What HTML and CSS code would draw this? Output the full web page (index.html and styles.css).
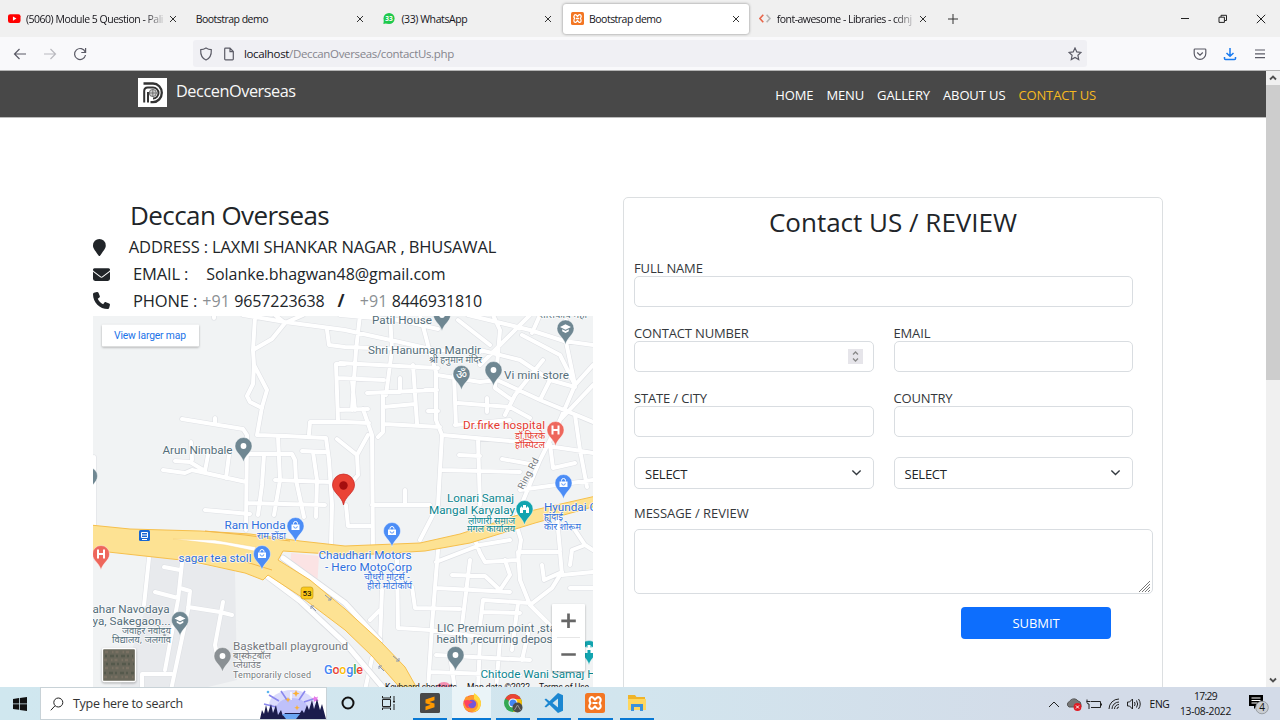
FILE: index.html
```html
<!DOCTYPE html>
<html lang="en">
<head>
<meta charset="utf-8">
<title>Bootstrap demo</title>
<link rel="stylesheet" href="styles.css">
</head>
<body>
<div class="tabs">
  <div class="tab">
    <svg class="fav" viewBox="0 0 14 14"><rect x="0" y="2.3" width="13.5" height="9.6" rx="2.4" fill="#f00"/><path d="M5.3 4.9v4.400l3.800-2.200z" fill="#fff"/></svg>
    <span class="tab-title fade t1">(5060) Module 5 Question - Pali</span><svg class="x" viewBox="0 0 8 8"><path d="M1 1l6 6M7 1L1 7"/></svg>
  </div>
  <div class="tab">
    <span class="tab-title">Bootstrap demo</span><svg class="x" viewBox="0 0 8 8"><path d="M1 1l6 6M7 1L1 7"/></svg>
  </div>
  <div class="tab">
    <svg class="fav" viewBox="0 0 14 14"><circle cx="6.500" cy="7" r="6" fill="#1fc94c"/><path d="M1 8l-.6 5 4-.8z" fill="#1fc94c"/><text x="6.500" y="9.500" font-size="7" font-weight="700" fill="#fff" text-anchor="middle">33</text></svg>
    <span class="tab-title wa">(33) WhatsApp</span><svg class="x" viewBox="0 0 8 8"><path d="M1 1l6 6M7 1L1 7"/></svg>
  </div>
  <div class="tab active">
    <svg class="fav" viewBox="0 0 20 20"><use href="#xampp"/></svg>
    <span class="tab-title">Bootstrap demo</span><svg class="x" viewBox="0 0 8 8"><path d="M1 1l6 6M7 1L1 7"/></svg>
  </div>
  <div class="tab">
    <svg class="fav" viewBox="0 0 14 14" fill="none" stroke-width="1.700"><path d="M4.600 3L1 7l3.600 4" stroke="#e8664a"/><path d="M8.200 3l3.600 4-3.600 4" stroke="#b5b5b5"/></svg>
    <span class="tab-title fade t5">font-awesome - Libraries - cdnj</span><svg class="x" viewBox="0 0 8 8"><path d="M1 1l6 6M7 1L1 7"/></svg>
  </div>
  <svg class="plus" viewBox="0 0 10 10"><path d="M5 0v10M0 5h10"/></svg>
  <div class="win">
    <svg viewBox="0 0 10 10"><path d="M1 4.500h8"/></svg>
    <svg viewBox="0 0 10 10"><path d="M1 3.200h5.400v5.200H1zM3 3V1.300h5.500v5.200H6.600"/></svg>
    <svg viewBox="0 0 10 10"><path d="M.8.8l8.400 8.400M9.200.8L.8 9.200"/></svg>
  </div>
</div>
<div class="toolbar">
  <div class="navbtns">
    <svg viewBox="0 0 14 14"><path d="M13 7H1.500M6.500 2L1.500 7l5 5"/></svg>
    <svg class="dim" viewBox="0 0 14 14"><path d="M1 7h11.500M7.500 2l5 5-5 5"/></svg>
    <svg viewBox="0 0 14 14"><path d="M12.200 5A5.500 5.500 0 1 0 12.500 8M12.600 1v4.500H8.300"/></svg>
  </div>
  <div class="url">
    <svg viewBox="0 0 14 14"><path d="M7 1c2 1.200 3.600 1.600 5.300 1.700C12.600 8 10.500 11.500 7 13 3.500 11.500 1.400 8 1.700 2.700 3.400 2.600 5 2.200 7 1z"/></svg>
    <svg viewBox="0 0 14 14"><path d="M3.500 1.200H8L11.300 4.500v7.500q0 .8-.8.8h-7q-.8 0-.8-.8V2q0-.8.8-.8zM8 1.300v3.400h3.300"/></svg>
    <span class="addr"><b>localhost</b>/DeccanOverseas/contactUs.php</span>
    <svg class="star" viewBox="0 0 14 14"><path d="M7 1l1.800 3.900 4.200.5-3.100 2.900.8 4.200L7 10.400l-3.700 2.100.8-4.200L1 5.400l4.200-.5z"/></svg>
  </div>
  <div class="tools">
    <svg viewBox="0 0 14 14"><path d="M2 2h10q.8 0 .8.800V6.500a5.800 5.800 0 0 1-11.600 0V2.800Q1.200 2 2 2zM4.200 5.500L7 8.200l2.800-2.700"/></svg>
    <svg class="dl" viewBox="0 0 14 14"><path d="M7 1v8M3.500 6L7 9.300 10.500 6M1.500 10v1.500q0 1 1 1h9q1 0 1-1V10"/></svg>
    <svg viewBox="0 0 14 14"><path d="M2 3h10M2 6.800h10M2 10.600h10"/></svg>
  </div>
</div>
<div class="viewport">
  <div class="page">
    <nav class="navbar">
      <div class="brand">
        <svg viewBox="0 0 29 29"><path fill="#fff" d="M0 0h29v29H0z"/><g fill="none" stroke="#333"><path d="M5.500 5.500h9.500a8.800 9.300 0 0 1 0 18.600H12.500" stroke-width="2.300"/><path d="M6.200 24.500V13q0-3.500 3.500-3.500h5.300a5.500 5.500 0 0 1 0 11" stroke-width="2"/><path d="M10 24.500V14" stroke-width="2"/></g><circle cx="14.800" cy="15" r="3.600" fill="#ccc" stroke="#555" stroke-width=".8"/><path d="M11.200 15h7.200M14.800 11.500v7" stroke="#555" stroke-width=".7"/></svg>
        <span>DeccenOverseas</span>
      </div>
      <div class="links"><a>HOME</a><a>MENU</a><a>GALLERY</a><a>ABOUT US</a><a class="current">CONTACT US</a></div>
    </nav>
    <main class="content">
      <section class="info">
        <h3>Deccan Overseas</h3>
        <div class="line"><svg viewBox="0 0 384 512"><path d="M172 502C27 292 0 270 0 192a192 192 0 0 1 384 0c0 78-27 100-172 310-9 14-31 14-40 0z"/></svg><span class="caps addr-line">ADDRESS : LAXMI SHANKAR NAGAR , BHUSAWAL</span></div>
        <div class="line"><svg viewBox="0 0 512 512"><path d="M48 64a48 48 0 0 0-29 86l218 164c11 9 27 9 38 0l218-164a48 48 0 0 0-29-86zM0 176v208a64 64 0 0 0 64 64h384a64 64 0 0 0 64-64V176L294 339a64 64 0 0 1-76 0z"/></svg><span class="caps label">EMAIL :</span><span class="mail">Solanke.bhagwan48@gmail.com</span></div>
        <div class="line"><svg viewBox="0 0 512 512"><path d="M165 25c-8-19-29-29-48-23l-88 24C12 30 0 46 0 64c0 247 201 448 448 448 18 0 34-12 38-29l24-88c6-19-4-40-23-48l-96-40c-16-7-35-2-46 11l-40 50c-71-34-128-91-162-162l50-40c13-11 18-30 11-46z"/></svg><span class="caps label">PHONE :</span><span class="cc">+91</span><span class="num">9657223638</span><b class="slash">/</b><span class="cc">+91</span><span class="num">8446931810</span></div>
        <svg class="map" viewBox="93 316 500 371">
          <defs>
            <path id="pin" d="M0 16C-1.500 9-8.500 6.500-8.500 0a8.500 8.500 0 0 1 17 0C8.500 6.500 1.500 9 0 16z" stroke="#fff" stroke-opacity=".7" stroke-width=".6"/>
            <g id="bag"><use href="#pin" fill="#4c8df6"/><path d="M-4-1.500h8v5.500h-8z" fill="#fff"/><path d="M-2-1.500v-1a2 2 0 0 1 4 0v1" fill="none" stroke="#fff"/><path d="M-1.800.3a1.800 1.800 0 0 0 3.600 0" fill="none" stroke="#4c8df6" stroke-width=".9"/></g>
            <g id="school"><use href="#pin" fill="#6f8792"/><path d="M-5.500-1.500L0-4.300l5.500 2.800L0 1.300zM-3.300.8L0 2.500 3.300.8v2L0 4.500-3.300 2.800z" fill="#fff"/></g>
            <g id="dot"><use href="#pin" fill="#6f8792"/><circle r="2.900" fill="#fff"/></g>
            <g id="hosp"><use href="#pin" fill="#ee675c"/><path d="M-3-4.500v9M3-4.500v9M-3 0h6" stroke="#fff" stroke-width="2"/></g>
            <g id="hall"><use href="#pin" fill="#12a4af"/><path d="M-4.500 4v-5l2-2v1.500h1V-4h3v2.500h1V-3l2 2v5h-3V1h-3v3z" fill="#fff"/></g>
            <path id="roads" d="M243 315L285 322 345 330 395 341 435 350 480 352M255 317L253 350 254 365 267 390 262 407 257 435 286 436 326 438M253 350L272 339 285 323 303 315M275 315l10 8M254 365L253 384 247 396 250 402 262 408M327 330L329 345 345 347 430 350M345 364H336L338 420M338 378L384 380M338 410L368 409M309 434L310 422 345 422 369 423M182 419L243 429 247 435 246 530M215 418v5M250 454L292 454 295 460 296 480 304 517M326 438L329 460 332 505 331 545M278 437L280 480 274 515M302 451L325 452M313 452L317 480 316 517M264 455L262 485 258 515M275 480L330 482M175 461L190 462 205 471 208 455M163 470L185 473 192 470 246 482M191 442L192 460M229 455L226 478M247 503L325 505M94 457V527M337 439L357 455 368 435M214 315v3
            M340 315L398 320 438 329M360 315L356 350 352 410M340 363L438 368M390 315L392 350 386 395M420 315L428 345 436 372V420L442 435 438 505 420 540M367 393L435 390M352 380L355 410M363 409L372 435 373 550M378 437L383 432V393M384 424L440 427M413 365L417 423M383 407L415 404M400 378v14M425 390h12M428 411h10M454 375L456 425M357 455L358 475 352 482M442 435L520 442 575 450 593 453M437 375L480 382 497 380 540 400 593 422M493 315L500 330 497 365 495 388 512 400M480 350L520 360 550 380 541 398M458 320L490 345M468 315L530 330 564 341 593 345M530 315L500 345 480 365M543 360L515 395 505 415M522 335L560 355 575 385 593 365M540 315L532 333M566 320v22L575 385M550 380L575 387M458 403L510 407 530 418M487 398v14M455 425L510 420M478 440L480 505M442 470L520 472M459 455L480 456M502 459L530 464M575 385L560 420 540 460 515 520M575 415L580 450 587 487M593 385L560 420M550 444L553 468 575 463M515 520L521 540M520 490L593 480M430 505H372M346 505L348 526 370 526M405 490v15
            M438 550L432 625 428 690M436 562L480 545 510 540M475 540L480 553 485 562 518 560 521 540M452 575L485 576 500 590 510 575 505 560M436 588L510 592M470 560L462 625M518 552L520 580 530 605 550 625M530 605L552 588 562 572 544 580 542 565M522 552L560 552 562 575 593 572M560 550L556 508M412 587L415 608 460 609M397 560L398 628 430 630 480 637M480 625L483 600 530 603M482 612L520 613M518 603L512 650M382 590L380 640 360 626M370 620L380 610M570 565L572 550 585 545 593 550M570 588H593M585 545L575 530M436 655L530 660M450 655L455 690M480 640L478 690M500 640L496 690M430 672L520 675M530 625L522 660M372 658L365 690M205 510L250 514M149 558L144 605M182 563L178 600 165 670M164 567L180 570M180 588L190 591 188 610 171 690M155 592L178 598M188 607L220 612 232 615M223 602L215 645 218 660M142 690V674H172"/>
          </defs>
          <path fill="#f1f3f4" d="M93 316h500v371H93z"/>
          <path fill="#e8eaed" d="M148 555L235 571 237 680 208 687H120L145 610z"/>
          <path fill="#fbe3e4" d="M291 553L319 556 317 588 290 568z"/>
          <g fill="none" stroke-linejoin="round" stroke-linecap="round"><use href="#roads" stroke="#dfe1e5" stroke-width="5.200"/><use href="#roads" stroke="#fff" stroke-width="4"/>
          <path d="M268 577L300 601 345 643 385 690M283 558L345 603 380 641" stroke="#dadce0" stroke-width="6.500"/><path d="M268 577L300 601 345 643 385 690M283 558L345 603 380 641" stroke="#fff" stroke-width="5"/></g>
          <path fill="#fde293" stroke="#f6bf4b" d="M90 525L130 529 200 531 250 534 300 541 345 546 420 543 460 534 530 511 596 496V506L535 523 470 543 425 551 375 554 345 555 283 551 278 560 310 580 345 609 381 642 405 667 418 690H402L372 656 345 630 300 596 268 575 263 580 245 573 190 561 90 550z"/>
          <path fill="#fff" stroke="#f6d27d" stroke-width=".5" d="M173 539L215 540 256 547 254 551 225 545z"/>
          <path fill="none" stroke="#f2b84a" d="M230 557L272 570M205 531L245 535 290 541"/>
          <g stroke="#8c96ad" fill="none"><path d="M325 595l6 5m0-3v3h-3M316 611l-5-5m0 3v-3h3M393 656l6 5m0-3v3h-3M384 671l-5-5m0 3v-3h3"/></g>
          <rect x="139" y="530" width="11" height="11" rx="1.500" fill="#1967d2"/><path d="M141.500 532.500h6v5h-6zM141.500 535h6M142 539.500h5" fill="none" stroke="#fff"/>
          <rect x="301" y="587" width="12" height="12" rx="2.500" fill="#fbc91b" stroke="#b99213" stroke-width=".6"/><text x="307" y="596" font-size="8" text-anchor="middle">53</text>
          <use href="#dot" x="442" y="315"/><use href="#school" x="565.500" y="328.500"/><use href="#pin" x="461.500" y="374" fill="#6f8792"/><text x="461.500" y="379" font-size="12" fill="#fff" text-anchor="middle">ॐ</text>
          <use href="#dot" x="493.500" y="370"/><use href="#hosp" x="555.500" y="430"/><use href="#bag" x="563.500" y="483"/><use href="#bag" x="295.500" y="526"/><use href="#bag" x="262" y="554"/><use href="#bag" x="392" y="531"/><use href="#hall" x="524.500" y="509"/><use href="#hosp" x="101" y="554"/><use href="#school" x="180" y="620"/>
          <g transform="translate(222.500 656)"><use href="#pin" fill="#8a9094"/><circle r="2.900" fill="#fff"/></g>
          <use href="#dot" x="455.500" y="655"/><use href="#dot" x="243.500" y="446"/><use href="#dot" x="89" y="476"/><use href="#hall" x="589" y="649"/>
          <circle cx="444" cy="690" r="8" fill="#f48fb1"/>
          <path d="M343.500 505C342 496 332.500 493 332.500 485a11 11 0 0 1 22 0c0 8-9.500 11-11 20z" fill="#ea4335" stroke="#c5221f" stroke-width=".7"/><circle cx="343.500" cy="485.500" r="4.200" fill="#a50e0e"/>
          <g class="lbl gray">
            <text x="372" y="323.500" textLength="60">Patil House</text>
            <text x="368" y="353.500" textLength="113">Shri Hanuman Mandir</text>
            <text x="429" y="363" textLength="53" lengthAdjust="spacingAndGlyphs" class="hi">श्री हनुमान मंदिर</text>
            <text x="504" y="378.500" textLength="65">Vi mini store</text>
            <text x="539" y="317.500" textLength="48" lengthAdjust="spacingAndGlyphs" class="hi">शासकीय महा</text>
            <text x="162.500" y="454" textLength="70">Arun Nimbale</text>
            <text x="92.500" y="613" textLength="77">ahar Navodaya</text>
            <text x="92.500" y="624.500" textLength="78">ya, Sakegaon...</text>
            <text x="122" y="634" textLength="49" lengthAdjust="spacingAndGlyphs" class="hi">जवाहर नवोदय</text>
            <text x="112" y="642.500" textLength="59" lengthAdjust="spacingAndGlyphs" class="hi">विद्यालय, जलगाँव</text>
            <text x="437" y="631.500" textLength="119">LIC Premium point ,sta</text>
            <text x="436.500" y="643" textLength="116">health ,recurring depos</text>
          </g>
          <g class="lbl brown">
            <text x="233" y="650" textLength="115">Basketball playground</text>
            <text x="233" y="659" textLength="38" lengthAdjust="spacingAndGlyphs" class="hi">बास्केटबॉल</text><text x="233" y="668" textLength="28" lengthAdjust="spacingAndGlyphs" class="hi">प्लेग्राउंड</text>
            <text x="233" y="678" textLength="78" class="sub">Temporarily closed</text>
            <text transform="translate(523 490) rotate(-62)" textLength="34" class="road">Ring Rd</text>
          </g>
          <g class="lbl red"><text x="463" y="429" textLength="82">Dr.firke hospital</text><text x="515" y="438.500" textLength="30" lengthAdjust="spacingAndGlyphs" class="hi">डॉ.फिरके</text><text x="515" y="447.500" textLength="30" lengthAdjust="spacingAndGlyphs" class="hi">हॉस्पिटल</text></g>
          <g class="lbl blue">
            <text x="224.500" y="529" textLength="61">Ram Honda</text><text x="257" y="538.500" textLength="29" lengthAdjust="spacingAndGlyphs" class="hi">राम होंडा</text>
            <text x="178.500" y="562" textLength="73">sagar tea stoll</text>
            <text x="318.500" y="559" textLength="93">Chaudhari Motors</text><text x="325" y="570.500" textLength="87">- Hero MotoCorp</text>
            <text x="364" y="580" textLength="46" lengthAdjust="spacingAndGlyphs" class="hi">चौधरी मोटर्स -</text><text x="367" y="589" textLength="45" lengthAdjust="spacingAndGlyphs" class="hi">हीरो मोटोकॉर्प</text>
            <text x="544" y="511" textLength="53">Hyundai C</text><text x="544" y="520" textLength="19" lengthAdjust="spacingAndGlyphs" class="hi">ह्युंदाई</text><text x="544" y="529.500" textLength="37" lengthAdjust="spacingAndGlyphs" class="hi">कार शोरूम</text>
          </g>
          <g class="lbl teal">
            <text x="447" y="502" textLength="67">Lonari Samaj</text><text x="429" y="514" textLength="86">Mangal Karyalay</text>
            <text x="468" y="523.500" textLength="47" lengthAdjust="spacingAndGlyphs" class="hi">लोणारी समाज</text><text x="467" y="532" textLength="48" lengthAdjust="spacingAndGlyphs" class="hi">मंगल कार्यालय</text>
            <text x="480.500" y="677.500" textLength="115">Chitode Wani Samaj H</text>
          </g>
          <g class="small"><text x="385" y="689.500" textLength="72">Keyboard shortcuts</text><text x="467" y="689.500" textLength="63">Map data ©2022</text><text x="539" y="689.500" textLength="50">Terms of Use</text></g>
          <text x="324" y="674" textLength="39" class="goog"><tspan fill="#4285f4">G</tspan><tspan fill="#ea4335">o</tspan><tspan fill="#fbbc05">o</tspan><tspan fill="#4285f4">g</tspan><tspan fill="#34a853">l</tspan><tspan fill="#ea4335">e</tspan></text>
          <g class="shadow">
            <rect x="102" y="324.500" width="97" height="22" rx="1" fill="#fff"/>
            <rect x="552" y="604" width="33" height="67" rx="1" fill="#fff"/>
            <rect x="102.500" y="648.500" width="33" height="33" rx="1.500" fill="#69675a" stroke="#fff" stroke-width="1.300"/>
          </g>
          <text x="114" y="339.300" textLength="72" font-size="10.300" fill="#1a73e8">View larger map</text>
          <path d="M557 637.500h23" stroke="#e6e6e6"/><path d="M568.500 613.500v14.500M561.300 620.800h14.500M561.300 654.500h14.500" stroke="#666" stroke-width="2.700"/>
          <g fill="none" stroke-width="2.500" stroke-dasharray="3 4 1.500 2" opacity=".45"><path d="M105 652h28M104 660h30M105 668h28M104 677h30" stroke="#8f7f70"/><path d="M105 656h28M106 664h28M104 673h30" stroke="#3f4a3c" stroke-dasharray="2 3 4 2"/></g>
        </svg>
      </section>
      <form class="card">
        <h3>Contact US / REVIEW</h3>
        <div class="grid">
          <div class="field wide"><label>FULL NAME</label><div class="input"></div></div>
          <div class="field"><label>CONTACT NUMBER</label><div class="input number"><svg viewBox="0 0 15 15"><path d="M0 0h15v15H0z" fill="#e6e5ea"/><path d="M5 5.500L7.500 3 10 5.500M5 9.500L7.500 12 10 9.500" fill="none" stroke="#888" stroke-width="1.300"/></svg></div></div>
          <div class="field"><label>EMAIL</label><div class="input"></div></div>
          <div class="field"><label>STATE / CITY</label><div class="input"></div></div>
          <div class="field"><label>COUNTRY</label><div class="input"></div></div>
          <div class="input select"><span>SELECT</span><svg viewBox="0 0 16 16"><path d="M2 5l6 6 6-6"/></svg></div>
          <div class="input select"><span>SELECT</span><svg viewBox="0 0 16 16"><path d="M2 5l6 6 6-6"/></svg></div>
        </div>
        <label class="msg">MESSAGE / REVIEW</label>
        <div class="input area"><svg viewBox="0 0 12 12"><path d="M0 12L11 1M3 12l8-8M6 12l5-5M9 12l2-2"/></svg></div>
        <button type="button">SUBMIT</button>
      </form>
    </main>
  </div>
  <div class="scroll"><svg viewBox="0 0 14 14"><path d="M4 8.500L7 5.500l3 3"/></svg><div class="thumb"></div><svg viewBox="0 0 14 14"><path d="M4 5.500l3 3 3-3"/></svg></div>
</div>
<div class="taskbar">
  <div class="start"><svg viewBox="0 0 14 14"><path d="M0 2l6-.9v5.400H0zM6.800 1L14 0v6.500H6.800zM0 7.300h6v5.400L0 12zM6.800 7.300H14V14l-7.200-1z"/></svg></div>
  <div class="search">
    <svg class="mag" viewBox="0 0 14 14"><circle cx="8.300" cy="5.500" r="4.500"/><path d="M5 8.800L.8 13.300"/></svg>
    <span>Type here to search</span>
    <svg class="art" viewBox="0 0 66 31">
      <ellipse cx="32" cy="17" rx="23" ry="15" fill="#dcdcfc"/><ellipse cx="32" cy="21" rx="16" ry="11" fill="#bfc1fa"/>
      <path d="M9 7l10 6M21 3l6 9M45 3l-6 9M56 10l-12 4M4 16l12 3" stroke="#8b88ee" stroke-width="1.600"/><path d="M31 4v8" stroke="#fff" stroke-width="1.500"/>
      <path d="M36 2l1 2.500L39.500 5.500 37 6.500 36 9l-1-2.500L32.500 5.500 35 4.500zM28 9l.8 2 2 .8-2 .8L28 14.500l-.8-2-2-.8 2-.8zM37 17l.8 2 2 .8-2 .8-.8 2-.8-2-2-.8 2-.8z" fill="#fbb034"/><path d="M54 8l2 1.500 2-1-.8 2.500 1.500 2-2.500-.3L54 14l-.2-2.500-2-1.500 2.200-.2z" fill="#e77be9"/><circle cx="8" cy="4" r="1.300" fill="#5bb5ef"/>
      <path d="M0 31l2-9 2 4 2-9 2 8 3-9 2 9 3-8 2 10 3-5 2 6 2-3h15l2-3 2 3 3-8 2 5 3-10 2 9 3-10 3 11 2-6 4 15z" fill="#1b1c4c"/><path d="M22 26h18l-4 5H26z" fill="#6aa6f3"/>
    </svg>
  </div>
  <div class="apps">
    <div><svg viewBox="0 0 20 20"><circle cx="10" cy="10" r="5.500" fill="none" stroke="#111" stroke-width="2"/></svg></div>
    <div><svg viewBox="0 0 20 20" fill="none" stroke="#222"><path d="M3.500 6.500h8v7h-8zM3.500 3v2h8V3M3.500 17v-2h8v2M15 3v4M15 11v6"/><path d="M14 8.500h2" stroke-width="2"/></svg></div>
    <div class="open"><svg viewBox="0 0 20 20"><rect width="20" height="20" rx="1.500" fill="#484848"/><path d="M5.500 6.500L14.500 3.500v3.700l-5 1.800 5 1.500v3.700l-9 3v-3.700l5-1.800-5-1.500z" fill="#ff9800"/></svg></div>
    <div class="open cur"><svg viewBox="0 0 20 20"><circle cx="10" cy="10.800" r="8.700" fill="#ff5a3c"/><path d="M3 5Q5 2 6 4q5-3 8-2 5 4 4.700 9-1 8-8.700 8Q3 19 1.500 12z" fill="#ff9a2e"/><path d="M12 0q7 4 7 11-1 8-9 8 6-2 6-7 0-4-4-6z" fill="#ffdb3e"/><circle cx="10" cy="11" r="4.200" fill="#7555d9"/><path d="M2 8q4-2 6 0l3 1-4 2q-3 3 3 4-7 2-8-7z" fill="#ff4260"/></svg></div>
    <div class="open"><svg viewBox="0 0 20 20"><circle cx="10" cy="10" r="9" fill="#34a853"/><path d="M2.200 5.500A9 9 0 0 1 17.800 5.500L10 10z" fill="#ea4335"/><path d="M10 6h8a9 9 0 0 1-8 13l4-7z" fill="#fbbc05"/><circle cx="10" cy="10" r="4.500" fill="#fff"/><circle cx="10" cy="10" r="3.500" fill="#4285f4"/><circle cx="14.500" cy="14.500" r="5" fill="#4b4b4b"/><path d="M11.500 17l3-5 3 5" stroke="#999" fill="none"/></svg></div>
    <div class="open"><svg viewBox="0 0 20 20"><path d="M14 0l5 2.300v15.400L14 20 5.500 11.800 2 14.500.500 13.500 4 10 .5 6.500 2 5.500l3.500 2.700zM14 5.500L8.500 10l5.500 4.500z" fill="#1c87d1"/></svg></div>
    <div class="open"><svg viewBox="0 0 20 20"><g id="xampp"><rect width="20" height="20" rx="2.500" fill="#f37623"/><path d="M5.500 4.500a2 2 0 0 1 2.500 0L10 6.500l2-2q2-1 3.300.8Q16.500 7 14.500 10q2 3 .8 4.700-1.300 1.800-3.300.8l-2-2-2 2q-2 1-3.300-.8Q3.500 13 5.500 10 3.500 7 5.500 4.500zM7.500 10h5" fill="none" stroke="#fff" stroke-width="2"/></g></svg></div>
    <div class="open"><svg viewBox="0 0 20 20"><path d="M1 2h7l1.500 2H18v13H1z" fill="#f0b429"/><path d="M1 6h18v11H1z" fill="#ffd75e"/><path d="M4 11h12v7h-3v-4H7v4H4z" fill="#3b91dc"/></svg></div>
  </div>
  <div class="tray">
    <svg viewBox="0 0 20 20"><path d="M5 13l5-5 5 5"/></svg>
    <svg viewBox="0 0 20 20"><path d="M5 13a3 3 0 0 1 .5-5.500A5 5 0 0 1 14 7q3 .5 3 3.500v2.500z" fill="#777" stroke="#555"/><circle cx="13.500" cy="13" r="3.900" fill="#e01b24" stroke="none"/><path d="M12 11.500l3 3M15 11.500l-3 3" stroke="#fff"/></svg>
    <svg viewBox="0 0 20 20"><path d="M6.500 7.500h10v6H7M17.500 9.500v2M2.500 7.500h3.500M3 5.500v3q0 1.500 2 1.500V15"/></svg>
    <svg viewBox="0 0 20 20"><path d="M5 15A10 10 0 0 1 15 5M8 15a7 7 0 0 1 7-7M10.500 15A4.500 4.500 0 0 1 15 10.500M13 15a2 2 0 0 1 2-2"/></svg>
    <svg viewBox="0 0 20 20"><path d="M3.500 8v4h2L8.500 15V5L5.500 8zM10.500 8q1.200 2 0 4M12.500 6.500q2.400 3.500 0 7M14.500 5q3.500 5 0 10"/></svg>
    <span class="eng">ENG</span>
    <div class="clock"><span class="time">17:29</span><span>13-08-2022</span></div>
    <svg class="note" viewBox="0 0 24 24"><path d="M3 3h14v11H11l-3 3v-3H3z" fill="#000" stroke="none"/><path d="M5.500 6h9M5.500 8.500h9M5.500 11h6" stroke="#fff"/><circle cx="16" cy="15.500" r="6.300" fill="#c9cdd2" stroke="#8c9095" stroke-width=".8"/><text x="16" y="19.200" font-size="10" text-anchor="middle" stroke="none" fill="#111">4</text></svg>
  </div>
</div>
</body>
</html>
```
FILE: styles.css
```css
* { box-sizing: border-box; }
body { margin: 0; width: 1280px; height: 720px; overflow: hidden; display: flex; flex-direction: column; font-family: "Open Sans", "Noto Sans", sans-serif; color: #212529; background: #fff; }
svg { display: block; flex: none; }
h3 { margin: 0; font-weight: 400; font-size: 26px; line-height: 32px; }

.tabs { height: 37px; flex: none; display: flex; align-items: center; background: #f0f0f0; }
.tab { width: 185.700px; height: 30px; margin-right: 2px; flex: none; display: flex; align-items: center; padding: 0 9px 0 8px; border-radius: 3px; }
.tab.active { background: #fff; box-shadow: 0 0 3px rgba(0,0,0,.45); }
.fav { width: 13px; height: 13px; margin-right: 5px; }
.tab-title { flex: 1; font-size: 10.500px; letter-spacing: -.52px; line-height: 16px; color: #15141a; white-space: nowrap; }
.t1 { letter-spacing: -.5px; }
.t5 { letter-spacing: -.52px; }
.wa { letter-spacing: -.4px; }
.fade { -webkit-mask-image: linear-gradient(90deg, #000 84%, rgba(0,0,0,.2) 97%); mask-image: linear-gradient(90deg, #000 84%, rgba(0,0,0,.2) 97%); }
.x { width: 8px; height: 8px; margin-left: 2px; stroke: #333; fill: none; }
.plus { width: 10px; height: 10px; margin-left: 10px; stroke: #333; }
.win { margin-left: auto; display: flex; gap: 28px; padding-right: 14px; }
.win svg { width: 10px; height: 10px; stroke: #222; fill: none; }

.toolbar { height: 34px; flex: none; display: flex; align-items: center; background: #f9f9fb; border-bottom: 1px solid #b4b4b4; }
.toolbar svg { width: 14px; height: 14px; fill: none; stroke: #5b5b66; stroke-width: 1.200; }
.navbtns { width: 193px; display: flex; gap: 16px; padding-left: 13px; }
.toolbar .dim { opacity: .4; }
.url { width: 894px; height: 27px; display: flex; align-items: center; padding: 0 5px 0 6px; background: #f0f0f4; border-radius: 3px; }
.url svg { margin-right: 9px; }
.url svg:nth-child(2) { margin-right: 8px; }
.url .star { margin: 0 0 0 auto; }
.addr { font-size: 11.500px; letter-spacing: -.35px; color: #85858d; line-height: 16px; padding-top: 1px; }
.addr b { font-weight: 400; color: #15141a; }
.tools { margin-left: auto; display: flex; gap: 16px; padding-right: 13px; }
.toolbar .dl { stroke: #1a7bf0; stroke-width: 1.500; }

.viewport { height: 616px; flex: none; display: flex; }
.page { width: 1266px; overflow: hidden; }
.navbar { height: 46px; display: flex; justify-content: space-between; padding: 0 170px 0 138px; background: #484848; box-shadow: 0 1px 0 #bbb; }
.brand { display: flex; gap: 9px; padding-top: 7px; }
.brand svg { width: 29px; height: 29px; }
.brand span { font-size: 16.300px; line-height: 26px; letter-spacing: -.45px; color: #f8f8f8; }
.links { display: flex; gap: 13px; padding-top: 14px; font-size: 13px; line-height: 20px; letter-spacing: -.12px; color: #fff; }
.links .current { color: #f5b921; }

.content { display: flex; gap: 30px; padding: 80px 0 0 93px; }
.info { width: 500px; flex: none; }
.info h3 { padding: 3px 0 3px 37px; letter-spacing: -.58px; line-height: 31px; }
.line { height: 26.700px; display: flex; align-items: center; white-space: nowrap; font-size: 16px; line-height: 24px; }
.line svg { height: 17px; width: auto; fill: #212529; }
.caps { font-size: 16.500px; letter-spacing: -.14px; margin-left: 23px; }
.mail { margin-left: 18px; letter-spacing: -.05px; }
.cc { margin-left: 5px; color: #8b8f93; letter-spacing: .2px; }
.num { margin-left: 4px; letter-spacing: -.11px; }
.slash { margin: 0 10px 0 13px; font-size: 17px; }
.map { width: 500px; height: 371px; margin-top: 2px; font-family: Roboto, "Noto Sans", sans-serif; }
.lbl { font-size: 11.700px; paint-order: stroke; stroke: #fff; stroke-opacity: .75; stroke-width: 1.600px; stroke-linejoin: round; }
.lbl .hi { font-family: "Noto Sans", "Noto Sans Devanagari", sans-serif; font-size: 9.500px; }
.lbl .sub { font-size: 9px; }
.lbl .road { font-size: 9.500px; }
.gray { fill: #546e7a; }
.brown { fill: #74787c; }
.red { fill: #e5392f; }
.blue { fill: #2f6fdd; }
.teal { fill: #0b8690; }
.small { font-size: 8.500px; fill: #111; }
.goog { font-size: 12.500px; font-weight: 500; paint-order: stroke; stroke: #fff; stroke-width: 1.500px; }
.shadow { filter: drop-shadow(0 1px 1px rgba(0,0,0,.3)); }

.card { width: 540px; height: 560px; border: 1px solid #dcdfe1; border-radius: 5px; padding: 8px 10px 0 10px; }
.card h3 { text-align: center; }
.grid { width: 499px; display: grid; grid-template-columns: 239.500px 239.500px; column-gap: 20px; row-gap: 20px; padding-top: 24px; }
.wide { grid-column: 1 / 3; }
label { display: block; font-size: 13px; line-height: 18px; letter-spacing: -.15px; color: #34383c; }
.field label { height: 16.500px; margin-top: -3px; }
.input { height: 31.500px; border: 1px solid #d9dde1; border-radius: 5px; }
.number { display: flex; align-items: center; justify-content: flex-end; padding-right: 10px; }
.number svg { width: 15px; height: 15px; }
.select { display: flex; align-items: center; justify-content: space-between; padding: 0 11px 0 10px; font-size: 13px; letter-spacing: -.25px; }
.select span { padding-top: 2px; }
.select svg { width: 11px; height: 11px; fill: none; stroke: #343a40; stroke-width: 2; }
label.msg { margin-top: 15px; height: 25px; letter-spacing: -.05px; }
.area { width: 519px; height: 65px; display: flex; align-items: flex-end; justify-content: flex-end; padding: 1px; }
.area svg { width: 12px; height: 12px; stroke: #777; fill: none; }
button { display: block; width: 150px; height: 32px; margin: 13px 0 0 327px; border: 0; border-radius: 4px; background: #0d6efd; color: #fff; font: 13px/20px "Open Sans", sans-serif; letter-spacing: -.05px; padding: 1px 0 0; }

.scroll { width: 14px; flex: none; display: flex; flex-direction: column; background: #f0f0f0; }
.scroll svg { width: 14px; height: 14px; fill: none; stroke: #505050; stroke-width: 1.800; }
.thumb { height: 295px; margin-bottom: auto; background: #cdcdcd; }

.taskbar { height: 33px; flex: none; display: flex; background: linear-gradient(90deg, #d0e7ef, #d2e5ee 50%, #d3dbe8 85%); }
.start { width: 40px; display: flex; align-items: center; padding-left: 13px; }
.start svg { width: 14px; height: 14px; fill: #111; }
.search { width: 287px; height: 33px; display: flex; align-items: center; background: #fff; border: 1px solid #c8d2d7; padding-left: 9px; font-size: 12.500px; letter-spacing: -.27px; color: #333; }
.mag { width: 14px; height: 14px; fill: none; stroke: #222; margin-right: 9px; }
.art { width: 66px; height: 31px; margin-left: auto; }
.apps { display: grid; grid-template-columns: repeat(8, 41.300px); }
.apps div { display: flex; align-items: center; justify-content: center; margin: 0 3.500px; border-bottom: 2px solid transparent; }
.apps svg { width: 20px; height: 20px; }
.apps .open { border-bottom-color: #0878d4; }
.apps .cur { background: #eaf4f8; margin: 0 1px; }
.tray { margin-left: auto; display: flex; align-items: center; padding-right: 10px; font-size: 10.300px; color: #111; }
.tray svg { width: 20px; height: 20px; fill: none; stroke: #222; }
.eng { width: 29px; margin-left: 1px; text-align: center; letter-spacing: -.4px; }
.clock { width: 63px; display: flex; flex-direction: column; align-items: center; line-height: 15px; letter-spacing: -.25px; }
.time { letter-spacing: -.7px; }
.tray .note { width: 24px; height: 24px; margin: 0 0 0 9px; }
```
